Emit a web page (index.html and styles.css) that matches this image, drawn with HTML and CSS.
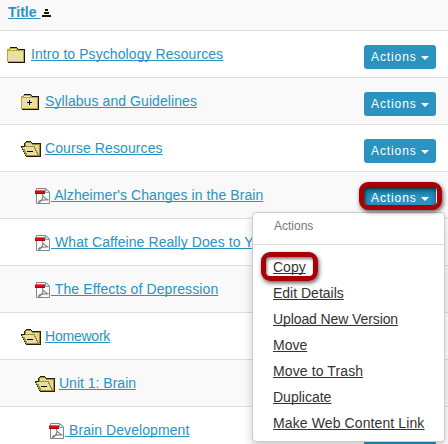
FILE: index.html
```
<!DOCTYPE html>
<html lang="en">
<head>
<meta charset="utf-8">
<title>Resources</title>
<link rel="stylesheet" href="styles.css">
</head>
<body>
<svg class="defs" width="0" height="0" aria-hidden="true">
  <defs>
    <symbol id="closed" viewBox="0 0 20 16">
      <path d="M0 2h2V1h1V0h7v1h1v1h7v14H1v-1H0z" fill="#171505"/>
      <path d="M0 2h2V1h8v1h1v1h6v12H0z" fill="#b5a73e"/>
      <path d="M1 4h15v10H1z" fill="#e8dfa6"/>
      <path d="M3 2h6v1H3z" fill="#f3edc8"/>
    </symbol>
    <symbol id="plus" viewBox="0 0 20 16">
      <use href="#closed" width="20" height="16"/>
      <path d="M8 6h1v2h2v1H9v2H8V9H6V8h2z" fill="#000"/>
    </symbol>
    <symbol id="open" viewBox="0 0 20 16">
      <path d="M3 2h1V1h1V0h5v1h1v1h9v14H5v-1H4v-2H3v-2H2V9H1V7H0V5h3z" fill="#242006"/>
      <path d="M4 2h1V1h5v1h1v1h8v12H5v-1H4v-2H3v-2H2V8H1V6h3z" fill="#9d9033"/>
      <path d="M5 2h5v1h1v1h7v9h-1v-2h-1V9h-1V7h-1V5H5z" fill="#e4da98"/>
      <path d="M2 6h11v2h1v2h1v2h1v2H6v-2H5v-2H4V8H2z" fill="#e8dfa6"/>
      <path d="M6 10h6v1H6z" fill="#000"/>
    </symbol>
    <symbol id="pdf" viewBox="0 0 15 16">
      <path d="M1.500 .5H11L14.500 4v11.500h-13z" fill="#fbfbfb" stroke="#858585"/>
      <path d="M10.500 .5v4h4z" fill="#d6effb" stroke="#65a9c8"/>
      <path d="M7.500 6.500c1 1 .5 2.500 0 4C6.500 12.500 5 14.500 4 14.500c-1.500-1 2-3 9.500-2.500C10 11 7.500 8 7.500 6.500z" fill="none" stroke="#858585" stroke-width="1.200"/>
      <path d="M0 2h10v4H0z" fill="#d90d0d"/>
      <path d="M0 2h10v1H0z" fill="#f05a55"/>
      <path d="M0 5h10v1H0z" fill="#ae0303"/>
    </symbol>
  </defs>
</svg>
<main class="list">
  <div class="row head"><a class="link title" href="#">Title </a><svg class="sort" width="9" height="8" viewBox="0 0 9 8"><path d="M3 0h3v2H3zM2 3h5v2H2zM0 6h9v2H0z" fill="#171505"/></svg></div>
  <div class="row"><svg class="icon folder"><use href="#closed"/></svg><a class="link" href="#">Intro to Psychology Resources</a><button class="btn">Actions<i class="caret"></i></button></div>
  <div class="row level1"><svg class="icon folder"><use href="#plus"/></svg><a class="link" href="#">Syllabus and Guidelines</a><button class="btn">Actions<i class="caret"></i></button></div>
  <div class="row level1"><svg class="icon folder"><use href="#open"/></svg><a class="link wide" href="#">Course Resources</a><button class="btn">Actions<i class="caret"></i></button></div>
  <div class="row level2"><svg class="icon pdf"><use href="#pdf"/></svg><a class="link" href="#"> Alzheimer's Changes in the Brain</a>
    <div class="dropdown"><button class="btn active">Actions<i class="caret"></i></button>
      <div class="menu">
        <div class="menu-head">Actions</div>
        <ul>
          <li><a class="copy" href="#">Copy</a></li>
          <li><a href="#">Edit Details</a></li>
          <li><a class="tight" href="#">Upload New Version</a></li>
          <li><a href="#">Move</a></li>
          <li><a class="wide" href="#">Move to Trash</a></li>
          <li><a href="#">Duplicate</a></li>
          <li><a class="wide" href="#">Make Web Content Link</a></li>
        </ul>
      </div>
    </div>
  </div>
  <div class="row level2"><svg class="icon pdf"><use href="#pdf"/></svg><a class="link" href="#"> What Caffeine Really Does to Y</a></div>
  <div class="row level2"><svg class="icon pdf"><use href="#pdf"/></svg><a class="link wide" href="#"> The Effects of Depression</a></div>
  <div class="row level1"><svg class="icon folder"><use href="#open"/></svg><a class="link narrow" href="#">Homework</a></div>
  <div class="row level2"><svg class="icon folder"><use href="#open"/></svg><a class="link plain" href="#">Unit 1: Brain</a></div>
  <div class="row level3"><svg class="icon pdf"><use href="#pdf"/></svg><a class="link" href="#"> Brain Development</a><button class="btn" aria-label="Actions"></button></div>
</main>
</body>
</html>
```
FILE: styles.css
```
*, *::before, *::after { box-sizing: border-box; }
html, body { margin: 0; height: 444px; overflow: hidden; background: #fff; }
body { font: 14px/20px "Liberation Sans", Arial, sans-serif; }
.defs { display: block; }
.list { width: 448px; }
.row {
  display: flex;
  align-items: flex-start;
  height: 47px;
  padding: 13px 12px 0 7px;
  border-top: 1px solid #ddd;
}
.row:nth-child(odd) { background: #f9f9f9; }
.row.head { height: 30px; padding: 2px 0 0 8px; border: 0; }
.row.level1 { padding-left: 21px; }
.row.level2 { padding-left: 35px; }
.row.level3 { padding-left: 49px; }
.link {
  color: #2a93c0;
  letter-spacing: .08px;
  white-space: pre;
  text-decoration: underline;
  text-decoration-thickness: 1px;
  text-underline-offset: 1px;
  text-decoration-skip-ink: none;
}
.wide { letter-spacing: .11px; }
.narrow { letter-spacing: -.22px; }
.tight { letter-spacing: -.1px; }
.plain { letter-spacing: 0; }
.title { font-weight: bold; width: 33px; letter-spacing: 0; }
.sort { margin: 7px 0 0 1px; }
.icon { flex: none; margin-top: 3px; }
.folder { width: 20px; height: 16px; margin-right: 4px; shape-rendering: crispEdges; }
.pdf { width: 15px; height: 16px; margin-right: 1px; }
.btn {
  display: flex;
  align-items: center;
  width: 72px;
  height: 24px;
  margin: 1px 0 0 auto;
  padding: 0 0 0 7px;
  border: 0;
  border-radius: 3px;
  background: #2a93c0;
  color: #fff;
  font: 12px/24px "Liberation Sans", Arial, sans-serif;
  letter-spacing: .9px;
}
.caret {
  margin: 2px 0 0 4px;
  border: 4px solid transparent;
  border-top-color: #fff;
  border-bottom: 0;
}
.dropdown { position: relative; margin: 1px 0 0 auto; }
.dropdown .btn { margin: 0; }
.active { box-shadow: inset 0 5px 7px #145a7a; }
.dropdown::after, .copy::after {
  content: "";
  position: absolute;
  z-index: 1;
  border: 5px solid #a90006;
  border-radius: 9px;
  box-shadow: 1px 2px 4px rgba(0,0,0,.65), inset 1px 2px 3px rgba(0,0,0,.5);
}
.dropdown::after { left: -5px; top: -4px; width: 83px; height: 28px; z-index: 3; pointer-events: none; }
.menu {
  position: absolute;
  z-index: 2;
  left: -112px;
  top: 26px;
  width: 193px;
  height: 230px;
  border: 1px solid #ccc;
  border-radius: 4px;
  background: #fff;
  box-shadow: 0 5px 10px rgba(0,0,0,.2);
}
.menu-head {
  height: 32px;
  padding: 3px 21px;
  border-bottom: 1px solid #ddd;
  color: #777;
  font-size: 12px;
}
.menu ul { margin: 9px 0 0; padding: 0 0 0 20px; list-style: none; }
.menu li { height: 26px; line-height: 26px; white-space: nowrap; }
.menu a {
  position: relative;
  color: #333;
  text-decoration-thickness: 1px;
  text-underline-offset: 1px;
  text-decoration-skip-ink: none;
}
.copy::after { left: -12px; top: -7px; width: 57px; height: 29px; }
```
